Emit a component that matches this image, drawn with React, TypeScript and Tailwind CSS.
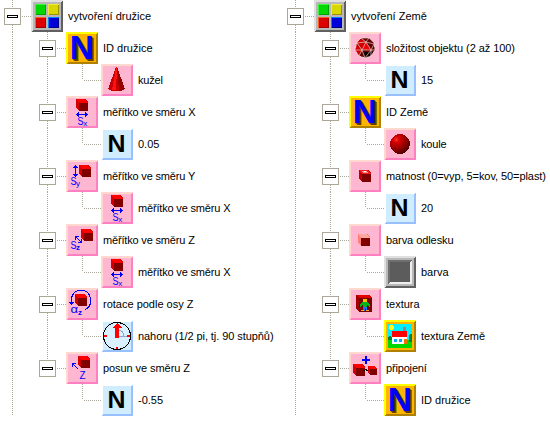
import React from "react";

type Kind =
  | "group" | "name" | "num" | "cone" | "sx" | "sy" | "sz" | "rot" | "clock" | "move"
  | "poly" | "sphere" | "gloss" | "tint" | "gray" | "texture" | "house" | "join";

type Item = { level: 0 | 1 | 2; icon: Kind; label: string; last?: boolean; tight?: string };

const BLUE = "#0000ff";

function Frame({ bg, light, dark, children }: { bg: string; light: string; dark: string; children?: React.ReactNode }) {
  return (
    <svg width="32" height="32" viewBox="0 0 32 32" className="block shrink-0 overflow-visible" shapeRendering="crispEdges">
      <rect width="32" height="32" fill={dark} />
      <path d="M0 0H32L30 2H2V30L0 32Z" fill={light} />
      <rect x="2" y="2" width="28" height="28" fill={bg} />
      {children}
    </svg>
  );
}

function Pink({ children }: { children?: React.ReactNode }) {
  return (
    <Frame bg="#ffb6d0" light="#ffd8d0" dark="#ff80c0">
      <path d="M30 2H31V31H2V30H30Z" fill="#ff80c0" />
      {children}
    </Frame>
  );
}

function Cube({ x, y, s = 1, top = "#ff0000", side = "#d40000", front = "#800000" }: { x: number; y: number; s?: number; top?: string; side?: string; front?: string }) {
  return (
    <g transform={`translate(${x} ${y}) scale(${s})`}>
      <path d="M0 0H9L12 3V12H3L0 9Z" fill={side} />
      <path d="M0 1L1 0H9L12 4H3Z" fill={top} />
      <rect x="3" y="4" width="9" height="8" fill={front} />
    </g>
  );
}

function Letter({ x, y, size, w, fill = BLUE, bold = false, shadow = false, children }: { x: number; y: number; size: number; w?: number; fill?: string; bold?: boolean; shadow?: boolean; children: string }) {
  return (
    <text x={x} y={y} fontSize={size} textLength={w} lengthAdjust="spacingAndGlyphs" fill={fill}
      fontWeight={bold ? 700 : 400} fontFamily="'Liberation Sans', sans-serif"
      className={shadow ? "[text-shadow:1px_1px_0_#604000,2px_2px_0_#604000]" : ""}>{children}</text>
  );
}

function Icon({ kind }: { kind: Kind }) {
  switch (kind) {
    case "group":
      return (
        <Frame bg="#b8b8b8" light="#e0e0e0" dark="#606060">
          {[
            [4, 4, "#00d800", "#00a000", "#40f040"],
            [17, 4, "#d8d800", "#a09000", "#f0e840"],
            [4, 17, "#dc0000", "#a00000", "#ff6020"],
            [17, 17, "#0000d8", "#000080", "#0080ff"],
          ].map(([x, y, c, d, l]) => (
            <g key={`${x}-${y}`} transform={`translate(${x} ${y})`}>
              <rect width="11" height="11" fill={d as string} />
              <path d="M0 0H11L10 1H1V10L0 11Z" fill={l as string} />
              <rect x="1" y="1" width="9" height="9" fill={c as string} />
            </g>
          ))}
        </Frame>
      );
    case "name":
      return (
        <Frame bg="#ffb400" light="#ffff00" dark="#b08000">
          <Letter x={3.8} y={27} size={33} w={24} bold shadow>N</Letter>
        </Frame>
      );
    case "num":
      return (
        <Frame bg="#d0ecff" light="#ffffff" dark="#98c0ff">
          <Letter x={6.4} y={24} size={24.5} w={18} fill="#000000" bold>N</Letter>
        </Frame>
      );
    case "cone":
      return (
        <Pink>
          <path d="M15 3H16L24 25L20 27H11L7 25Z" fill="#c80000" />
          <path d="M15 3L11 26H15L16 4Z" fill="#ff1010" />
          <path d="M16 3L24 25L20 27H18Z" fill="#980000" />
        </Pink>
      );
    case "sx":
      return (
        <Pink>
          <Cube x={10} y={3} />
          <path d="M10 18H22V19H10ZM12 16H13V21H12ZM11 17H12V20H11ZM19 16H20V21H19ZM20 17H21V20H20Z" fill={BLUE} />
          <Letter x={11.5} y={29} size={10} w={6}>S</Letter>
          <Letter x={17.2} y={30} size={8}>x</Letter>
        </Pink>
      );
    case "sy":
      return (
        <Pink>
          <Cube x={13} y={5} />
          <path d="M9 5H10V17H9ZM8 6H11V7H8ZM7 7H12V8H7ZM8 15H11V16H8ZM7 14H12V15H7Z" fill={BLUE} />
          <Letter x={4.5} y={25} size={10} w={6}>S</Letter>
          <Letter x={10} y={26} size={8}>y</Letter>
        </Pink>
      );
    case "sz":
      return (
        <Pink>
          <Cube x={15} y={5} />
          <path d="M9.5 12.5L15.5 18.5M9.5 16V12.5H13M12 18.5H15.5V15" stroke={BLUE} fill="none" />
          <Letter x={4.5} y={25} size={10} w={6}>S</Letter>
          <Letter x={10} y={26} size={8} bold>z</Letter>
        </Pink>
      );
    case "rot":
      return (
        <Pink>
          <Cube x={9} y={5.5} />
          <path d="M5.5 16V11A9.5 9 0 0 1 24.5 11V15A9 9 0 0 1 19 21.5" stroke={BLUE} fill="none" />
          <path d="M3 14H8L5.5 17Z" fill={BLUE} />
          <Letter x={4.5} y={25} size={11} w={7.5}>α</Letter>
          <Letter x={12} y={27} size={8} bold>z</Letter>
        </Pink>
      );
    case "clock":
      return (
        <Frame bg="#d0ecff" light="#ffffff" dark="#98c0ff">
          <circle cx="16" cy="16" r="13.5" fill="#d8f0ff" stroke="#000" />
          <path d="M16 16.5H27M18 10C21 11 23 13 23 16" stroke="#90a8d0" fill="none" />
          <path d="M16 3L21 8H18V18H14V8H11Z" fill="#ff0000" />
          <path d="M3 15H6V17H3ZM26 15H29V17H26ZM15 27H17V29H15Z" fill="#ff0000" />
        </Frame>
      );
    case "move":
      return (
        <Pink>
          <Cube x={12} y={4} />
          <path d="M6.5 11.5L12.5 17.5M6.5 15V11.5H10" stroke={BLUE} fill="none" />
          <Letter x={13.5} y={27} size={10} w={6}>Z</Letter>
        </Pink>
      );
    case "poly":
      return (
        <Pink>
          <path d="M12 6H20L25 11L26 18L22 24L16 26L10 24L6 18L8 10Z" fill="#600000" />
          <path d="M12 6L8 10L6 18L10 24L13 18L17 10Z" fill="#d00000" />
          <path d="M13 18L17 10L22 18Z" fill="#f00000" />
          <path d="M14 20L24 20L21 24L17 26Z" fill="#100000" />
          <g shapeRendering="auto">
            <path d="M12 6H20L25 11L26 18L22 24L16 26L10 24L6 18L8 10ZM8 11L17 10L25 12M17 10L13 18L10 24M17 10L22 18L26 18M6 18H22L16 26L13 18L8 11M22 18L25 12M22 18V24M12 6L17 10L20 6" fill="none" stroke="#e8d0d0" strokeWidth=".7" />
          </g>
        </Pink>
      );
    case "sphere":
      return (
        <Pink>
          <defs>
            <radialGradient id="ball" cx=".32" cy=".28" r=".75">
              <stop offset="0" stopColor="#ff3030" /><stop offset=".2" stopColor="#d80000" />
              <stop offset=".6" stopColor="#980000" /><stop offset="1" stopColor="#500000" />
            </radialGradient>
          </defs>
          <circle cx="16" cy="16" r="10" fill="url(#ball)" />
        </Pink>
      );
    case "gloss":
      return (
        <Pink>
          <Cube x={10} y={10} top="#f02020" side="#c00000" />
          <path d="M13 11H18L19 13H14Z" fill="#ff9090" /><rect x="15" y="11" width="2" height="1" fill="#fff" />
        </Pink>
      );
    case "tint":
      return <Pink><Cube x={9} y={10} top="#ffa8a0" side="#ff8078" /></Pink>;
    case "gray":
      return (
        <Frame bg="#b8b8b8" light="#e0e0e0" dark="#606060">
          <rect x="4" y="4" width="24" height="24" fill="#eeeeee" />
          <path d="M4 4H28L26 6H6V26L4 28Z" fill="#707070" />
          <rect x="6" y="6" width="20" height="20" fill="#5c5c5c" />
        </Frame>
      );
    case "texture":
      return (
        <Pink>
          <path d="M7 7L20 7L23 10V24H10L7 21Z" fill="#a00000" />
          <path d="M7 7H20L23 10H10Z" fill="#e00000" />
          <rect x="10" y="10" width="13" height="14" fill="#780000" />
          <path d="M14 11H18V14H14Z" fill="#ffc000" />
          <path d="M13 14H19L21 17V19L18 17V19H14V17L11 19V17Z" fill="#00b818" />
          <path d="M14 19H18V23H16.5V21H15.5V23H14Z" fill="#2070ff" />
          <path d="M12 22H15V23H12ZM17 22H20V23H17Z" fill="#ffb000" />
        </Pink>
      );
    case "house":
      return (
        <Frame bg="#ffb400" light="#ffff00" dark="#b08000">
          <rect x="4" y="4" width="24" height="24" fill="#00f0ff" />
          <rect x="4" y="20" width="24" height="8" fill="#00d800" />
          <path d="M6 5H9V6H10V9H9V10H6V9H5V6H6Z" fill="#ffff20" />
          <rect x="19" y="7" width="3" height="5" fill="#a08080" />
          <path d="M25 15H26V14H28V22H25ZM4 17H5V16H7V17H8V20H4Z" fill="#008030" />
          <rect x="8" y="16" width="15" height="8" fill="#fff" />
          <path d="M8 11H23V17H8Z" fill="#ff0000" />
          <path d="M10 19H13V22H10ZM15 19H18V22H15Z" fill="#00a8f8" />
          <rect x="20" y="19" width="3" height="5" fill="#f07000" />
        </Frame>
      );
    case "join":
      return (
        <Pink>
          <path d="M16 4H18V7H21V9H18V12H16V9H13V7H16Z" fill={BLUE} />
          <Cube x={4} y={12} /><Cube x={19} y={14} s={0.75} />
          <path d="M15 18H16L17 17L18 19L19 18" stroke="#000" fill="none" />
        </Pink>
      );
  }
}

function VLine({ className }: { className: string }) {
  return <div className={`w-px bg-[repeating-linear-gradient(to_bottom,#aca899_0_1px,transparent_1px_2px)] ${className}`} />;
}

function HLine({ className }: { className: string }) {
  return <div className={`h-px bg-[repeating-linear-gradient(to_right,transparent_0_1px,#aca899_1px_2px)] ${className}`} />;
}

function Toggle({ last }: { last?: boolean }) {
  return (
    <div className="flex h-8 w-[17px] shrink-0 flex-col items-center">
      <VLine className="h-2" />
      <div className="flex size-[17px] shrink-0 items-center justify-center border border-[#aca899] bg-white">
        <div className="h-[3px] w-[11px] border border-black" />
      </div>
      {!last && <VLine className="h-[7px]" />}
    </div>
  );
}

function Guide({ visible = true }: { visible?: boolean }) {
  return <div className="flex h-8 w-[35px] shrink-0 pl-2">{visible && <VLine className="h-8" />}</div>;
}

function Row({ item, parentLast }: { item: Item; parentLast: boolean }) {
  return (
    <div className="flex h-8 items-center pl-1">
      {item.level > 0 && <Guide />}
      {item.level > 1 && <Guide visible={!parentLast} />}
      {item.level < 2 ? (
        <>
          <Toggle last={item.last} />
          <HLine className="w-[10px] shrink-0" />
        </>
      ) : (
        <div className="flex h-8 w-[27px] shrink-0 pl-2">
          <VLine className="h-4" />
          <HLine className="mt-4 w-[18px]" />
        </div>
      )}
      <Icon kind={item.icon} />
      <span className={`ml-[5px] whitespace-nowrap font-['Liberation_Sans',Arial,sans-serif] text-[11px] leading-4 text-black ${item.tight ?? ""}`}>
        {item.label}
      </span>
    </div>
  );
}

function Tree({ items, className }: { items: Item[]; className: string }) {
  return (
    <div className={`shrink-0 ${className}`}>
      {items.map((item, i) => (
        <Row key={i} item={item} parentLast={i > 0 && !!items[i - 1].last} />
      ))}
    </div>
  );
}

const SNUG = "tracking-[-0.17px]";
const SLIGHT = "tracking-[-0.07px]";

const satellite: Item[] = [
  { level: 0, icon: "group", label: "vytvoření družice" },
  { level: 1, icon: "name", label: "ID družice" },
  { level: 2, icon: "cone", label: "kužel", tight: SNUG },
  { level: 1, icon: "sx", label: "měřítko ve směru X", tight: SNUG },
  { level: 2, icon: "num", label: "0.05" },
  { level: 1, icon: "sy", label: "měřítko ve směru Y", tight: SNUG },
  { level: 2, icon: "sx", label: "měřítko ve směru X", tight: SNUG },
  { level: 1, icon: "sz", label: "měřítko ve směru Z", tight: SNUG },
  { level: 2, icon: "sx", label: "měřítko ve směru X", tight: SNUG },
  { level: 1, icon: "rot", label: "rotace podle osy Z" },
  { level: 2, icon: "clock", label: "nahoru (1/2 pi, tj. 90 stupňů)", tight: SLIGHT },
  { level: 1, icon: "move", label: "posun ve směru Z", tight: SLIGHT },
  { level: 2, icon: "num", label: "-0.55" },
];
satellite[11].last = true;

const earth: Item[] = [
  { level: 0, icon: "group", label: "vytvoření Země" },
  { level: 1, icon: "poly", label: "složitost objektu (2 až 100)", tight: SLIGHT },
  { level: 2, icon: "num", label: "15" },
  { level: 1, icon: "name", label: "ID Země" },
  { level: 2, icon: "sphere", label: "koule", tight: SNUG },
  { level: 1, icon: "gloss", label: "matnost (0=vyp, 5=kov, 50=plast)", tight: SLIGHT },
  { level: 2, icon: "num", label: "20" },
  { level: 1, icon: "tint", label: "barva odlesku", tight: SLIGHT },
  { level: 2, icon: "gray", label: "barva" },
  { level: 1, icon: "texture", label: "textura" },
  { level: 2, icon: "house", label: "textura Země", tight: SLIGHT },
  { level: 1, icon: "join", label: "připojení", last: true, tight: SNUG },
  { level: 2, icon: "name", label: "ID družice" },
];

export default function App() {
  return (
    <div className="flex h-[421px] w-[550px] overflow-hidden bg-white">
      <Tree items={satellite} className="w-[283px]" />
      <Tree items={earth} className="w-[267px]" />
    </div>
  );
}
